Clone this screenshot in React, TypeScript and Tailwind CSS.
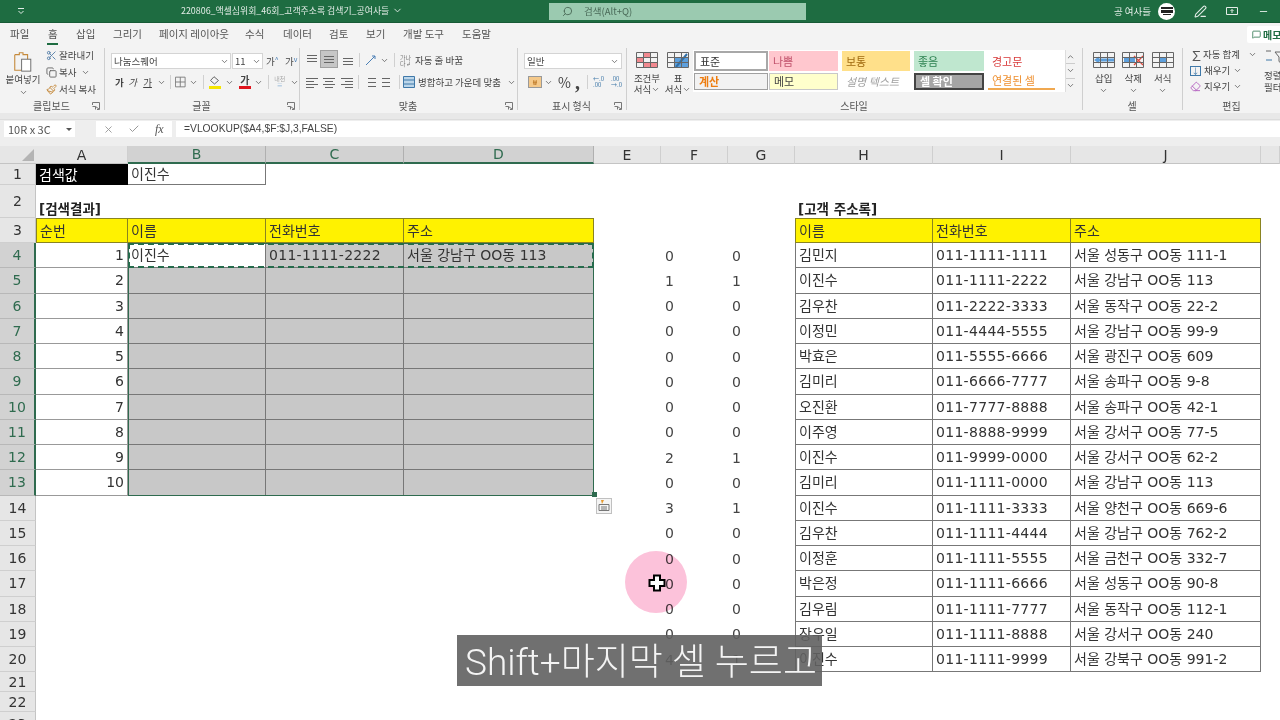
import {
  Check,
  ChevronDown,
  Copy,
  Eraser,
  MessageSquare,
  Minus,
  Paintbrush,
  PenLine,
  Scissors,
  Search,
  X,
} from "lucide-react";
import type { ReactNode } from "react";

const tabs = [
  ["파일", "w-[38px]"],
  ["홈", "w-[28px]"],
  ["삽입", "w-[37px]"],
  ["그리기", "w-[46px]"],
  ["페이지 레이아웃", "w-[86px]"],
  ["수식", "w-[38px]"],
  ["데이터", "w-[46px]"],
  ["검토", "w-[37px]"],
  ["보기", "w-[37px]"],
  ["개발 도구", "w-[59px]"],
  ["도움말", "w-[50px]"],
];

const results = [
  ["이진수", "011-1111-2222", "서울 강남구 OO동 113"],
];

const customers = [
  ["김민지", "011-1111-1111", "서울 성동구 OO동 111-1"],
  ["이진수", "011-1111-2222", "서울 강남구 OO동 113"],
  ["김우찬", "011-2222-3333", "서울 동작구 OO동 22-2"],
  ["이정민", "011-4444-5555", "서울 강남구 OO동 99-9"],
  ["박효은", "011-5555-6666", "서울 광진구 OO동 609"],
  ["김미리", "011-6666-7777", "서울 송파구 OO동 9-8"],
  ["오진환", "011-7777-8888", "서울 송파구 OO동 42-1"],
  ["이주영", "011-8888-9999", "서울 강서구 OO동 77-5"],
  ["이진수", "011-9999-0000", "서울 강서구 OO동 62-2"],
  ["김미리", "011-1111-0000", "서울 강남구 OO동 113"],
  ["이진수", "011-1111-3333", "서울 양천구 OO동 669-6"],
  ["김우찬", "011-1111-4444", "서울 강남구 OO동 762-2"],
  ["이정훈", "011-1111-5555", "서울 금천구 OO동 332-7"],
  ["박은정", "011-1111-6666", "서울 성동구 OO동 90-8"],
  ["김우림", "011-1111-7777", "서울 동작구 OO동 112-1"],
  ["장우일", "011-1111-8888", "서울 강서구 OO동 240"],
  ["이진수", "011-1111-9999", "서울 강북구 OO동 991-2"],
];

const countF = [0, 1, 0, 0, 0, 0, 0, 0, 2, 0, 3, 0, 0, 0, 0, 0, 4];
const countG = [0, 1, 0, 0, 0, 0, 0, 0, 1, 0, 1, 0, 0, 0, 0, 0, 1];
const columns = ["A", "B", "C", "D", "E", "F", "G", "H", "I", "J", ""];

const Chev = ({ className = "" }: { className?: string }) => (
  <ChevronDown size={9} strokeWidth={2} className={`text-[#555] shrink-0 ${className}`} />
);

// 가로줄 아이콘 (맞춤 그룹)
const Lines = ({ rows, active }: { rows: [number, number, number][]; active?: boolean }) => (
  <span className={`flex h-[16px] w-[16px] items-center justify-center ${active ? "bg-[#c6c6c6] outline outline-[#a0a0a0]" : ""}`}>
    <svg width="14" height="14" viewBox="0 0 14 14" stroke="#666" strokeWidth="1">
      {rows.map(([a, b, y]) => (
        <line key={y} x1={a} x2={b} y1={y + 0.5} y2={y + 0.5} />
      ))}
    </svg>
  </span>
);

const Launcher = () => (
  <svg width="8" height="8" viewBox="0 0 8 8" fill="none" stroke="#777" className="shrink-0">
    <path d="M.5 3V.5H7.500V7.500H5M.5 4.500H3.500V7.500M3.500 4.500L7 7" />
  </svg>
);

const Group = ({
  label,
  width,
  children,
  launcher,
}: {
  label: string;
  width: string;
  children: ReactNode;
  launcher?: boolean;
}) => (
  <div className={`flex h-full shrink-0 flex-col ${width}`}>
    <div className="h-[52px] shrink-0 overflow-hidden">{children}</div>
    <div className="relative mr-px flex h-[14px] items-center justify-center text-[10px] leading-none text-[#555]">
      {label}
      {launcher && (
        <span className="absolute right-[3px] top-[3px]">
          <Launcher />
        </span>
      )}
    </div>
  </div>
);

const Sep = () => <div className="mb-[3px] mt-[1px] w-px shrink-0 bg-[#cfcfcf]" />;

const GridIcon = ({ children }: { children?: ReactNode }) => (
  <svg width="22" height="18" viewBox="0 0 22 18" fill="none">
    {children}
    <path d="M.5 1.500H21.500V16.500H.5ZM.5 6.500H21.500M.5 11.500H21.500M7.500 1.500V16.500M14.500 1.500V16.500" stroke="#666" />
  </svg>
);

const StyleCell = ({ className, children }: { className: string; children: ReactNode }) => (
  <div className={`flex items-center pl-[4px] text-[11px] leading-none ${className}`}>{children}</div>
);

function Ribbon() {
  return (
    <div className="flex h-[66px] shrink-0 bg-[#f3f3f3] text-[9.500px] text-[#444]">
      <Group label="클립보드" width="w-[104px]" launcher>
        <div className="flex">
          <div className="flex w-[46px] flex-col items-center pt-[3px]">
            <svg width="22" height="23" viewBox="0 0 24 24" fill="none">
              <path d="M3 4.500H8V2.500H12V4.500H17V10" stroke="#c58a3c" strokeWidth="1.200" />
              <path d="M3 4.500V21.500H10" stroke="#c58a3c" strokeWidth="1.200" />
              <rect x="10.500" y="9.500" width="10" height="13" fill="#fff" stroke="#666" />
            </svg>
            <span className="mt-[2px] whitespace-nowrap leading-none">붙여넣기</span>
            <Chev className="mt-[3px]" />
          </div>
          <div className="flex flex-col gap-[2px] pt-[1px]">
            <div className="flex h-[15px] items-center gap-[2px]">
              <Scissors size={11} className="text-[#557fa8]" />
              <span>잘라내기</span>
            </div>
            <div className="flex h-[15px] items-center gap-[2px]">
              <Copy size={11} className="text-[#666]" />
              <span>복사</span>
              <Chev className="ml-[3px]" />
            </div>
            <div className="flex h-[15px] items-center gap-[2px]">
              <Paintbrush size={11} className="text-[#c58a3c]" />
              <span>서식 복사</span>
            </div>
          </div>
        </div>
      </Group>
      <Sep />
      <Group label="글꼴" width="w-[194px]" launcher>
        <div className="flex h-[22px] items-end pl-[6px]">
          <div className="flex h-[16px] w-[120px] items-center justify-between border border-[#d4d4d4] bg-white pl-[2px] pr-[1px]">
            나눔스퀘어 <Chev />
          </div>
          <div className="ml-[1px] flex h-[16px] w-[31px] items-center justify-between border border-[#d4d4d4] bg-white pl-[2px] pr-[1px]">
            11 <Chev />
          </div>
          <span className="ml-[3px] w-[18px] leading-[16px]">가<sup className="text-[7px] text-[#4a7fb5]">^</sup></span>
          <span className="ml-[1px] leading-[16px]">가<sup className="text-[7px] text-[#4a7fb5]">v</sup></span>
        </div>
        <div className="mt-[5px] flex h-[16px] items-center pl-[10px]">
          <span className="w-[15px] font-bold">가</span>
          <span className="w-[17px] italic">가</span>
          <span className="w-[14px] underline">가</span>
          <Chev className="ml-[2px]" />
          <span className="mx-[4px] h-[14px] w-px bg-[#d0d0d0]" />
          <svg width="12" height="12" viewBox="0 0 12 12" fill="none" stroke="#777">
            <path d="M.5.5H11.500V11.500H.5ZM6 .5V11.500M.5 6H11.500" />
          </svg>
          <Chev className="ml-[3px]" />
          <span className="mx-[5px] h-[14px] w-px bg-[#d0d0d0]" />
          <span className="flex w-[13px] flex-col items-center">
            <svg width="11" height="9" viewBox="0 0 11 9" fill="none" stroke="#666">
              <path d="M5 .7L9.500 4.500 5.500 8 1.500 4.500Z" />
            </svg>
            <span className="mt-[1px] h-[3px] w-[12px] bg-[#f5e500]" />
          </span>
          <Chev className="ml-[4px]" />
          <span className="ml-[5px] flex w-[12px] flex-col items-center">
            <span className="text-[10px] font-bold leading-[10px]">가</span>
            <span className="mt-[1px] h-[3px] w-[12px] bg-[#e0141c]" />
          </span>
          <Chev className="ml-[3px]" />
          <span className="mx-[5px] h-[14px] w-px bg-[#d0d0d0]" />
          <span className="flex w-[14px] flex-col items-center text-[6px] leading-[6px] text-[#aaa]">
            내천
            <span className="text-[#8db3d6]">≡</span>
          </span>
          <Chev className="ml-[4px]" />
        </div>
      </Group>
      <Sep />
      <Group label="맞춤" width="w-[217px]" launcher>
        <div className="flex h-[20px] items-end pl-[4px]">
          <Lines rows={[[2, 12, 3], [2, 12, 6], [2, 12, 9]]} />
          <span className="ml-[1px]">
            <Lines active rows={[[2, 12, 4], [2, 12, 7], [2, 12, 10]]} />
          </span>
          <span className="ml-[2px]">
            <Lines rows={[[3, 13, 6], [3, 13, 9], [3, 13, 12]]} />
          </span>
          <span className="mx-[4px] h-[14px] w-px bg-[#d0d0d0]" />
          <svg width="14" height="14" viewBox="0 0 14 14" fill="none" stroke="#4a7fb5">
            <path d="M2 12L11 3M8 3H11V6" />
          </svg>
          <Chev className="ml-[2px] mb-[2px]" />
          <span className="mx-[5px] h-[14px] w-px bg-[#d0d0d0]" />
          <span className="w-[12px] text-[6px] leading-[6px] text-[#777]">가나<br />다↲</span>
          <span className="ml-[3px] leading-[14px]">자동 줄 바꿈</span>
        </div>
        <div className="mt-[7px] flex h-[16px] items-center pl-[4px]">
          <Lines rows={[[1, 13, 3], [1, 9, 6], [1, 13, 9], [1, 9, 12]]} />
          <span className="ml-[1px]">
            <Lines rows={[[1, 13, 3], [3, 11, 6], [1, 13, 9], [3, 11, 12]]} />
          </span>
          <span className="ml-[2px]">
            <Lines rows={[[1, 13, 3], [5, 13, 6], [1, 13, 9], [5, 13, 12]]} />
          </span>
          <span className="mx-[3px] h-[14px] w-px bg-[#d0d0d0]" />
          <Lines rows={[[5, 13, 3], [5, 13, 7], [5, 13, 11]]} />
          <span className="ml-[2px]">
            <Lines rows={[[1, 9, 3], [1, 9, 7], [1, 9, 11]]} />
          </span>
          <span className="mx-[3px] h-[14px] w-px bg-[#d0d0d0]" />
          <svg width="12" height="12" viewBox="0 0 12 12" fill="#bcd6ea" stroke="#3f78a8">
            <path d="M.5.5H11.500V11.500H.5ZM.5 4H11.500M.5 8H11.500" />
          </svg>
          <span className="ml-[3px] whitespace-nowrap">병합하고 가운데 맞춤</span>
          <Chev className="ml-[6px]" />
        </div>
      </Group>
      <Sep />
      <Group label="표시 형식" width="w-[108px]" launcher>
        <div className="flex h-[22px] items-end pl-[6px]">
          <div className="flex h-[16px] w-[98px] items-center justify-between border border-[#d4d4d4] bg-white pl-[2px] pr-[2px]">
            일반 <Chev />
          </div>
        </div>
        <div className="mt-[5px] flex h-[16px] items-center pl-[10px]">
          <span className="flex h-[12px] w-[14px] items-center justify-center border border-[#999] bg-[#f5c98a] text-[7px] leading-none text-[#a85a00]">
            ₩
          </span>
          <Chev className="ml-[2px]" />
          <span className="ml-[5px] w-[16px] text-[14px] leading-none">%</span>
          <span className="ml-[1px] w-[7px] font-['Liberation_Serif',serif] text-[20px] font-bold leading-[10px]">,</span>
          <span className="mx-[5px] h-[14px] w-px bg-[#d0d0d0]" />
          <span className="w-[14px] text-[6px] leading-[6px] text-[#3f78a8]">←.0<br />.00</span>
          <span className="ml-[4px] w-[14px] text-[6px] leading-[6px] text-[#3f78a8]">.00<br />→.0</span>
        </div>
      </Group>
      <Sep />
      <Group label="스타일" width="w-[455px]">
        <div className="flex">
          <div className="flex w-[66px] shrink-0 pl-[5px] pt-[4px]">
            <div className="flex w-[30px] flex-col items-center">
              <GridIcon>
                <rect x="7" y="2" width="7" height="5" fill="#f1898f" />
                <rect x="1" y="6" width="7" height="5" fill="#f1898f" />
                <rect x="7" y="11" width="14" height="5" fill="#f1898f" />
              </GridIcon>
              <span className="mt-[3px] whitespace-nowrap leading-[12px]">조건부</span>
              <span className="flex items-center whitespace-nowrap leading-[10px]">서식<Chev /></span>
            </div>
            <div className="ml-[1px] flex w-[30px] flex-col items-center">
              <GridIcon>
                <rect x="8" y="6" width="13" height="10" fill="#5d9fdc" />
                <path d="M9 16L20 3" stroke="#2f6fa8" strokeWidth="2" />
              </GridIcon>
              <span className="mt-[3px] leading-[12px]">표</span>
              <span className="flex items-center whitespace-nowrap leading-[10px]">서식<Chev /></span>
            </div>
          </div>
          <div className="mt-[3px] flex h-[42px] w-[382px] bg-white">
            <div className="grid w-[372px] grid-cols-[74px_69px_74px_70px_70px] grid-rows-[20px_17px] gap-x-[1px] gap-y-[2px] py-[1px] pl-[1px]">
              <StyleCell className="border-2 border-[#a8a8a8] text-[#333]">표준</StyleCell>
              <StyleCell className="bg-[#ffc7ce] text-[#c0506a]">나쁨</StyleCell>
              <StyleCell className="mx-[3px] bg-[#ffe08a] text-[#a06a10]">보통</StyleCell>
              <StyleCell className="bg-[#bfe7cf] text-[#2c8050]">좋음</StyleCell>
              <StyleCell className="ml-[3px] text-[#d83838]">경고문</StyleCell>
              <StyleCell className="border border-[#a0a0a0] bg-[#f2f2f2] font-bold text-[#ee7d10]">계산</StyleCell>
              <StyleCell className="border border-[#c8c8c8] bg-[#ffffcc] text-[#444]">메모</StyleCell>
              <StyleCell className="mx-[3px] italic text-[#a0a0a0]">설명 텍스트</StyleCell>
              <StyleCell className="border-2 border-[#444] bg-[#a5a5a5] font-bold text-white">셀 확인</StyleCell>
              <StyleCell className="ml-[3px] border-b-2 border-[#f0a850] text-[#ee9030]">연결된 셀</StyleCell>
            </div>
            <div className="flex w-[10px] flex-col border-l border-[#ddd] bg-[#f3f3f3] text-[#666]">
              <span className="flex flex-1 items-center justify-center rotate-180"><Chev /></span>
              <span className="flex flex-1 items-center justify-center border-y border-[#ccc]"><Chev /></span>
              <span className="flex flex-1 items-center justify-center"><Chev /></span>
            </div>
          </div>
        </div>
      </Group>
      <Sep />
      <Group label="셀" width="w-[99px]">
        <div className="flex pl-[6px] pt-[4px]">
          {["삽입", "삭제", "서식"].map((t, i) => (
            <div key={t} className="flex w-[29.500px] flex-col items-center">
              <GridIcon>
                {i === 0 && <path d="M1 9L6 5.500V7.500H21V10.500H6V12.500Z" fill="#5d9fdc" />}
                {i === 1 && (
                  <>
                    <rect x="2" y="7" width="11" height="4" fill="#5d9fdc" />
                    <path d="M12 5L21 14M21 5L12 14" stroke="#e0483c" strokeWidth="1.300" />
                  </>
                )}
                {i === 2 && <rect x="7" y="6" width="8" height="6" fill="#5d9fdc" />}
              </GridIcon>
              <span className="mt-[3px] leading-[12px]">{t}</span>
              <Chev className="mt-[2px]" />
            </div>
          ))}
        </div>
      </Group>
      <Sep />
      <Group label="편집" width="w-[98px]">
        <div className="flex pl-[7px]">
          <div className="flex flex-col gap-[1px] whitespace-nowrap">
            <div className="flex h-[15px] items-center gap-[3px]">
              <span className="w-[10px] text-[13px] leading-none text-[#555]">∑</span>
              <span>자동 합계</span>
              <Chev className="ml-[5px]" />
            </div>
            <div className="flex h-[15px] items-center gap-[3px]">
              <span className="flex h-[10px] w-[11px] items-center justify-center border border-[#3f78a8] text-[8px] leading-none text-[#3f78a8]">↓</span>
              <span>채우기</span>
              <Chev />
            </div>
            <div className="flex h-[15px] items-center gap-[3px]">
              <Eraser size={11} className="text-[#b45fc0]" />
              <span>지우기</span>
              <Chev />
            </div>
          </div>
          <div className="ml-[7px] flex w-[32px] shrink-0 flex-col items-start whitespace-nowrap">
            <svg width="22" height="18" viewBox="0 0 22 18" fill="none" stroke="#666">
              <path d="M2 4H7M11 5H21L17 10V16L15 14.500V10Z" />
              <path d="M2 13H8" stroke="#3f78a8" />
            </svg>
            <span className="mt-[4px] leading-[12px]">정렬 및</span>
            <span className="leading-[12px]">필터 ~</span>
          </div>
        </div>
      </Group>
    </div>
  );
}

const baseCell = "flex min-w-0 items-center overflow-hidden whitespace-nowrap";

const tableCell = `${baseCell} border-r border-b border-[#777] px-[3px] text-[#333]`;

function Sheet() {
  const cells: ReactNode[] = [];
  // 열 머리글
  cells.push(
    <div key="corner" className="relative border-b border-[#c4c4c4] bg-[#e6e6e6]">
      <span className="absolute bottom-[2px] right-[2px] h-0 w-0 border-b-[12px] border-l-[12px] border-b-[#b4b4b4] border-l-transparent" />
    </div>,
  );
  columns.forEach((c) => {
    const selected = c === "B" || c === "C" || c === "D";
    cells.push(
      <div
        key={`col${c}`}
        className={
          selected
            ? "flex items-center justify-center border-r border-b-2 border-r-[#b0b0b0] border-b-[#2f6b4f] bg-[#d2d2d2] text-[#2f6b4f]"
            : "flex items-center justify-center border-r border-b border-r-[#cfcfcf] border-b-[#c4c4c4] bg-[#e6e6e6] text-[#333]"
        }
      >
        {c}
      </div>,
    );
  });

  for (let row = 1; row <= 23; row++) {
    const sel = row >= 4 && row <= 13;
    cells.push(
      <div
        key={`r${row}`}
        className={
          sel
            ? "flex items-center justify-center border-r-2 border-b border-r-[#2f6b4f] border-b-[#b8b8b8] bg-[#d2d2d2] text-[#2f6b4f]"
            : "flex items-center justify-center border-r border-b border-r-[#c4c4c4] border-b-[#cfcfcf] bg-[#e6e6e6] text-[#333]"
        }
      >
        {row}
      </div>,
    );
    for (let col = 0; col < 11; col++) {
      const k = `${row}-${col}`;
      const fCount = row >= 4 && row <= 20 ? (col === 5 ? countF[row - 4] : col === 6 ? countG[row - 4] : null) : null;
      if (row === 1 && col === 0) {
        cells.push(<div key={k} className={`${baseCell} bg-black px-[3px] text-white`}>검색값</div>);
      } else if (row === 1 && col === 1) {
        cells.push(<div key={k} className={`${tableCell} bg-white`}>이진수</div>);
      } else if (row === 2 && col === 0) {
        cells.push(<div key={k} className="-mb-[1px] flex items-end whitespace-nowrap px-[3px] text-[13.500px] font-bold leading-[20px] text-[#222]">[검색결과]</div>);
      } else if (row === 2 && col === 7) {
        cells.push(<div key={k} className="-mb-[1px] flex items-end whitespace-nowrap px-[3px] text-[13.500px] font-bold leading-[20px] text-[#222]">[고객 주소록]</div>);
      } else if (row === 3 && col <= 3) {
        const t = ["순번", "이름", "전화번호", "주소"][col];
        cells.push(<div key={k} className={`${baseCell} border-t border-r border-b border-[#8a8420] bg-[#fff200] px-[3px] text-[#333] ${col === 0 ? "border-l" : ""}`}>{t}</div>);
      } else if (row === 3 && col >= 7 && col <= 9) {
        const t = ["이름", "전화번호", "주소"][col - 7];
        cells.push(<div key={k} className={`${baseCell} border-t border-r border-b border-[#8a8420] bg-[#fff200] px-[3px] text-[#333] ${col === 7 ? "border-l" : ""}`}>{t}</div>);
      } else if (sel && col === 0) {
        cells.push(<div key={k} className={`${baseCell} justify-end border-r border-b border-[#999] bg-white px-[3px] text-[#333]`}>{row - 3}</div>);
      } else if (sel && col >= 1 && col <= 3) {
        const text = row === 4 ? results[0][col - 1] : "";
        cells.push(<div key={k} className={`${tableCell} ${col === 2 ? "tracking-[0.3px]" : ""} ${row === 4 && col === 1 ? "bg-white" : "bg-[#c8c8c8]"}`}>{text}</div>);
      } else if (fCount !== null) {
        cells.push(<div key={k} className={`${baseCell} pl-[4px] text-[#444]`}>{fCount}</div>);
      } else if (row >= 4 && row <= 20 && col >= 7 && col <= 9) {
        cells.push(<div key={k} className={`${tableCell} ${col === 7 ? "border-l" : ""} ${col === 8 ? "tracking-[0.3px]" : ""}`}>{customers[row - 4][col - 7]}</div>);
      } else {
        cells.push(<div key={k} />);
      }
    }
  }

  return (
    <div className="relative grid min-h-0 flex-1 grid-cols-[36px_92px_138px_138px_190px_67px_67px_67px_138px_138px_190px_19px] grid-rows-[18px_21px_33px_25px_repeat(17,25.25px)_20px_20px_25px] overflow-hidden bg-white text-[14px] leading-none">
      {cells}
      {/* 선택 영역과 복사 점선 */}
      <div className="pointer-events-none absolute inset-0 col-start-3 col-end-6 row-start-5 row-end-15 border-[1.500px] border-[#2f6b4f]" />
      <div className="pointer-events-none absolute inset-0 col-start-3 col-end-6 row-start-5 row-end-6 border-2 border-dashed border-[#256b4c]" />
    </div>
  );
}

export default function App() {
  return (
    <div className="relative flex h-[720px] w-[1280px] flex-col overflow-hidden bg-white font-['DejaVu_Sans','Noto_Sans_CJK_KR',sans-serif]">
      <div className="font-['Noto_Sans_CJK_KR',sans-serif]">
        <div className="flex h-[23px] items-center border-b border-[#175a36] bg-[#1e6c41] text-[8.900px] text-[#e3ece7]">
          <div className="w-[181px] pl-[17px]">
            <svg width="8" height="8" viewBox="0 0 8 8" fill="none" stroke="#e3ece7">
              <path d="M1 1.500H7M1.500 4L4 6.500 6.500 4" />
            </svg>
          </div>
          <div className="flex w-[368px] items-center gap-[3px]">
            <span className="whitespace-nowrap">220806_액셀심위회_46회_고객주소록 검색기_공여사들</span>
            <ChevronDown size={11} />
          </div>
          <div className="flex h-[17px] w-[257px] items-center bg-[#9bcab0] pl-[13px] text-[9.500px] text-[#4a6a58]">
            <Search size={11} className="-scale-x-100" />
            <span className="ml-[11px]">검색(Alt+Q)</span>
          </div>
          <div className="flex flex-1 items-center">
            <span className="ml-[308px] whitespace-nowrap text-[9.500px]">공 여사들</span>
            <span className="ml-[7px] flex h-[17px] w-[17px] flex-col items-center justify-center gap-[1px] rounded-full bg-white">
              <span className="h-[2px] w-[12px] bg-[#222]" />
              <span className="h-[3px] w-[12px] bg-[#222]" />
              <span className="h-[1px] w-[8px] bg-[#222]" />
            </span>
            <PenLine size={13} className="ml-[19px]" />
            <svg width="12" height="10" viewBox="0 0 12 10" fill="none" stroke="#e3ece7" className="ml-[19px]">
              <path d="M.5 1.500H11.500V8.500H.5ZM6 7V3.500M4.500 5L6 3.500 7.500 5" />
            </svg>
            <Minus size={11} className="ml-[20px]" />
          </div>
        </div>
        <div className="flex h-[24px] items-center bg-[#f3f3f3] pb-[2px] pl-[10px] text-[10.500px] text-[#555]">
          {tabs.map(([t, w]) => (
            <div key={t} className={`relative whitespace-nowrap ${w}`}>
              {t}
              {t === "홈" && <span className="absolute -bottom-[3px] -left-[1px] h-[2px] w-[11px] bg-[#1e6c41]" />}
            </div>
          ))}
          <div className="ml-auto flex h-[17px] w-[33px] items-center gap-[2px] overflow-hidden rounded-l-[2px] bg-white pl-[5px] text-[10px] font-bold text-[#1e6c41]">
            <MessageSquare size={9} className="shrink-0" />
            <span className="whitespace-nowrap">메모</span>
          </div>
        </div>
        <Ribbon />
        <div className="h-[7px] border-b border-[#dcdcdc] bg-[#e8e8e8]" />
        <div className="flex h-[26px] items-start bg-[#eeeeee] pt-[1px] text-[12px] text-[#555]">
          <div className="ml-[4px] flex h-[16px] w-[71px] items-center justify-between bg-white pl-[4px] pr-[3px] text-[11px]">
            10R x 3C
            <span className="h-0 w-0 border-x-[3px] border-t-[3px] border-x-transparent border-t-[#555]" />
          </div>
          <div className="ml-[21px] flex h-[16px] w-[76px] items-center bg-white pl-[7px] text-[#999]">
            <X size={11} />
            <Check size={12} className="ml-[14px]" />
            <span className="ml-[15px] font-['Liberation_Serif',serif] text-[12px] italic text-[#555]">fx</span>
          </div>
          <div className="ml-[4px] flex h-[16px] flex-1 items-center bg-white pl-[8px] font-['Liberation_Sans',sans-serif] text-[10.300px] text-[#444]">
            =VLOOKUP($A4,$F:$J,3,FALSE)
          </div>
        </div>
      </div>
      <Sheet />

      {/* 녹화 화면 위에 겹친 것들 */}
      <div className="absolute left-[592px] top-[492px] h-[5px] w-[5px] bg-[#2f6b4f]" />
      <div className="absolute left-[596px] top-[498px] flex h-[16px] w-[16px] items-center justify-center border border-[#c0c0c0] bg-[#f4f4f4]">
        <svg width="12" height="12" viewBox="0 0 12 12" fill="none">
          <path d="M3 0L6 0 4 4Z" fill="#e89a2c" />
          <path d="M1 4.500H11V10.500H1Z" stroke="#777" />
          <path d="M3 7H9M3 9H9" stroke="#777" />
        </svg>
      </div>
      <div className="absolute left-[625px] top-[551px] h-[62px] w-[62px] rounded-full bg-[#fcc2da] mix-blend-multiply" />
      <svg width="18" height="18" viewBox="0 0 18 18" className="absolute left-[648px] top-[574px]">
        <path d="M6 1.500H12V6H16.500V12H12V16.500H6V12H1.500V6H6Z" fill="#fff" stroke="#000" strokeWidth="2" />
      </svg>
      <div className="absolute left-[457px] top-[635px] flex h-[51px] w-[365px] items-center whitespace-nowrap bg-[#606060]/90 pl-[8px] pt-[3px] font-['Roboto','Noto_Sans_CJK_KR',sans-serif] text-[37px] font-light leading-none text-[#f4f4f4]">
        Shift+마지막 셀 누르고
      </div>
    </div>
  );
}
